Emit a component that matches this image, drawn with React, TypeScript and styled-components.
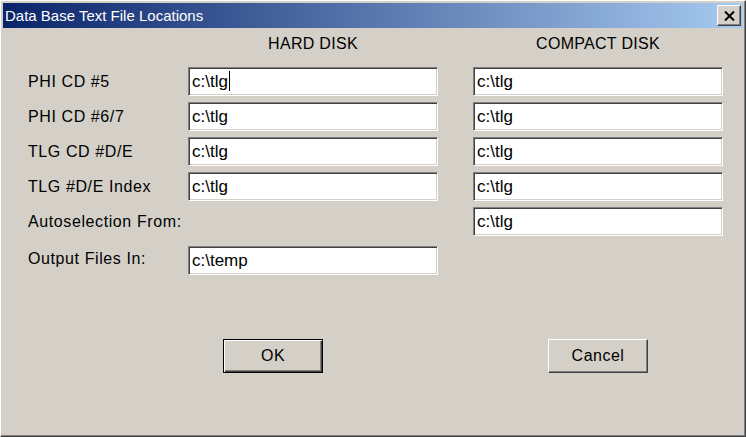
import React from 'react';
import styled, { createGlobalStyle } from 'styled-components';

const FACE = '#D4D0C8';

const GlobalStyle = createGlobalStyle`
  html, body {
    margin: 0;
    padding: 0;
    background: ${FACE};
  }
  body {
    font-family: 'Liberation Sans', Arial, sans-serif;
  }
`;

type PathRow = {
  label: string;
  hard?: string;
  compact?: string;
  focused?: boolean;
};

const ROWS: PathRow[] = [
  { label: 'PHI CD #5', hard: 'c:\\tlg', compact: 'c:\\tlg', focused: true },
  { label: 'PHI CD #6/7', hard: 'c:\\tlg', compact: 'c:\\tlg' },
  { label: 'TLG CD #D/E', hard: 'c:\\tlg', compact: 'c:\\tlg' },
  { label: 'TLG #D/E Index', hard: 'c:\\tlg', compact: 'c:\\tlg' },
  { label: 'Autoselection From:', compact: 'c:\\tlg' },
];

const CloseGlyph = () => (
  <svg width="11" height="10" viewBox="0 0 11 10">
    <path d="M1 0.5 L10 9.5 M10 0.5 L1 9.5" stroke="#000" strokeWidth="2" />
  </svg>
);

const App = () => (
  <>
    <GlobalStyle />
    <Window>
      <TitleBar>
        <Title>Data Base Text File Locations</Title>
        <CloseButton aria-label="Close">
          <CloseGlyph />
        </CloseButton>
      </TitleBar>
      <Content>
        <HeaderRow>
          <span />
          <ColumnHeader>HARD DISK</ColumnHeader>
          <ColumnHeader>COMPACT DISK</ColumnHeader>
        </HeaderRow>
        <Rows>
          {ROWS.map((row) => (
            <FormRow key={row.label}>
              <Label>{row.label}</Label>
              {row.hard ? (
                <Field>
                  {row.hard}
                  {row.focused && <Caret />}
                </Field>
              ) : (
                <span />
              )}
              {row.compact ? <Field>{row.compact}</Field> : <span />}
            </FormRow>
          ))}
        </Rows>
        <OutputRow>
          <Label $raise>Output Files In:</Label>
          <Field>c:\temp</Field>
          <span />
        </OutputRow>
        <ButtonRow>
          <span />
          <DialogButton $default $offset={35}>
            OK
          </DialogButton>
          <DialogButton $offset={75}>Cancel</DialogButton>
        </ButtonRow>
      </Content>
    </Window>
  </>
);

const Window = styled.div`
  box-sizing: border-box;
  width: 746px;
  height: 437px;
  padding: 1px;
  background: ${FACE};
  border-top: 1px solid #ffffff;
  border-left: 1px solid #ffffff;
  border-right: 1px solid #404040;
  border-bottom: 1px solid #404040;
  box-shadow: inset -1px -1px 0 #808080, inset 1px 1px 0 ${FACE};
  display: flex;
  flex-direction: column;
`;

const TitleBar = styled.div`
  margin: 1px 1px 0 1px;
  height: 25px;
  display: flex;
  align-items: center;
  padding: 0 2px 0 2px;
  background: linear-gradient(to right, #0a246a, #a6caf0);
`;

const Title = styled.div`
  flex: 1;
  color: #ffffff;
  font-size: 15px;
  line-height: 25px;
  white-space: nowrap;
`;

const CloseButton = styled.div`
  box-sizing: border-box;
  width: 24px;
  height: 21px;
  background: ${FACE};
  border-top: 1px solid #ffffff;
  border-left: 1px solid #ffffff;
  border-right: 1px solid #404040;
  border-bottom: 1px solid #404040;
  box-shadow: inset -1px -1px 0 #808080;
  display: flex;
  align-items: center;
  justify-content: center;
`;

const Content = styled.div`
  display: flex;
  flex-direction: column;
  padding: 6px 0 0 26px;
`;

const gridColumns = `
  display: grid;
  grid-template-columns: 125px 250px 250px;
  column-gap: 35px;
  align-items: center;
`;

const HeaderRow = styled.div`
  ${gridColumns}
  height: 20px;
  margin-bottom: 13px;
`;

const ColumnHeader = styled.div`
  text-align: center;
  font-size: 16px;
  letter-spacing: 0.3px;
  line-height: 20px;
  color: #000000;
`;

const Rows = styled.div`
  display: flex;
  flex-direction: column;
  gap: 6px;
`;

const FormRow = styled.div`
  ${gridColumns}
  height: 29px;
`;

const OutputRow = styled(FormRow)`
  margin-top: 10px;
`;

const Label = styled.div<{ $raise?: boolean }>`
  font-size: 16px;
  letter-spacing: 0.6px;
  color: #000000;
  white-space: nowrap;
  margin-top: ${({ $raise }) => ($raise ? '-4px' : '0')};
`;

const Field = styled.div`
  box-sizing: border-box;
  height: 29px;
  background: #ffffff;
  border-top: 1px solid #808080;
  border-left: 1px solid #808080;
  border-right: 1px solid #ffffff;
  border-bottom: 1px solid #ffffff;
  box-shadow: inset 1px 1px 0 #404040, inset -1px -1px 0 ${FACE};
  padding: 0 0 1px 3px;
  font-size: 17px;
  line-height: 25px;
  color: #000000;
  display: flex;
  align-items: center;
`;

const Caret = styled.span`
  display: inline-block;
  width: 1px;
  height: 20px;
  margin-left: 1px;
  background: #000000;
`;

const ButtonRow = styled.div`
  ${gridColumns}
  margin-top: 64px;
`;

const DialogButton = styled.div<{ $default?: boolean; $offset: number }>`
  box-sizing: border-box;
  justify-self: start;
  margin-left: ${({ $offset }) => $offset}px;
  width: 100px;
  height: 34px;
  background: ${FACE};
  border: 1px solid;
  border-color: ${({ $default }) =>
    $default ? '#000000' : '#ffffff #404040 #404040 #ffffff'};
  box-shadow: ${({ $default }) =>
    $default
      ? 'inset 1px 1px 0 #ffffff, inset -1px -1px 0 #404040, inset -2px -2px 0 #808080'
      : 'inset -1px -1px 0 #808080'};
  display: flex;
  align-items: center;
  justify-content: center;
  font-size: 16px;
  letter-spacing: 0.5px;
  color: #000000;
`;

export default App;
